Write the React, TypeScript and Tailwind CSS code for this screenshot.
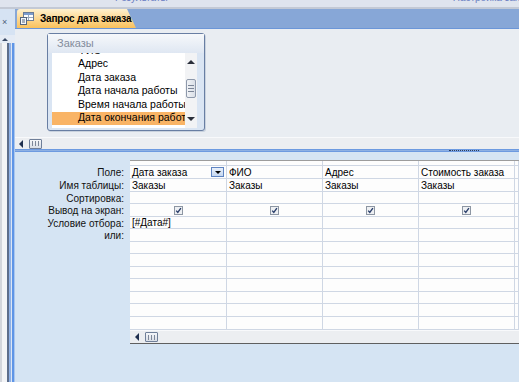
import React from "react";

const rowHeights = [
  "h-[13px]", "h-[13px]", "h-[12px]", "h-[13px]", "h-[12px]", "h-[13px]", "h-[12px]",
  "h-[13px]", "h-[12px]", "h-[13px]", "h-[12px]", "h-[13px]", "h-[13px]",
];

const labels = ["Поле:", "Имя таблицы:", "Сортировка:", "Вывод на экран:", "Условие отбора:", "или:"];

const columns = [
  { field: "Дата заказа", table: "Заказы", criteria: "[#Дата#]", dropdown: true, show: true, w: "w-[97px]" },
  { field: "ФИО", table: "Заказы", criteria: "", dropdown: false, show: true, w: "w-[96px]" },
  { field: "Адрес", table: "Заказы", criteria: "", dropdown: false, show: true, w: "w-[96px]" },
  { field: "Стоимость заказа", table: "Заказы", criteria: "", dropdown: false, show: true, w: "w-[96px]" },
  { field: "", table: "", criteria: "", dropdown: false, show: false, w: "flex-1" },
];

const fields = ["ФИО", "Адрес", "Дата заказа", "Дата начала работы", "Время начала работы", "Дата окончания работы"];

function CheckBox() {
  return (
    <svg width="9" height="9" viewBox="0 0 9 9">
      <rect x="0.5" y="0.5" width="8" height="8" fill="#eef0f3" stroke="#8d96a3" />
      <path d="M2.2 4.6 L3.8 6.4 L6.9 2.2" fill="none" stroke="#2b3f6b" strokeWidth="1.4" />
    </svg>
  );
}

function ScrollBar({ arrowLeft }: { arrowLeft: string }) {
  return (
    <div className="h-full flex items-center bg-[#eceef1] border-t border-[#f8f9fb]">
      <div className={`${arrowLeft} w-0 h-0 border-y-[4px] border-y-transparent border-r-[4px] border-r-[#1f2f4f]`} />
      <div className="ml-[6px] w-[13px] h-[10px] border border-[#6f7f99] rounded-[1px] bg-gradient-to-b from-[#f4f6f9] to-[#d9dee6] flex items-center justify-center gap-[2px]">
        <div className="w-px h-[5px] bg-[#7d8799]" />
        <div className="w-px h-[5px] bg-[#7d8799]" />
        <div className="w-px h-[5px] bg-[#7d8799]" />
      </div>
    </div>
  );
}

function QueryIcon() {
  return (
    <svg width="14" height="13" viewBox="0 0 14 13">
      <rect x="3.5" y="0.5" width="10" height="8" fill="#ffffff" stroke="#6b7c96" />
      <rect x="4" y="1" width="9" height="2" fill="#7d9ccd" />
      <line x1="8.5" y1="3" x2="8.5" y2="8" stroke="#9aa7ba" />
      <line x1="4" y1="5.5" x2="13" y2="5.5" stroke="#9aa7ba" />
      <rect x="0.5" y="5.5" width="6" height="7" fill="#f4f6fa" stroke="#56667f" />
      <line x1="2" y1="8" x2="5" y2="8" stroke="#56667f" />
      <line x1="2" y1="10" x2="5" y2="10" stroke="#56667f" />
    </svg>
  );
}

export default function App() {
  return (
    <div className="w-[519px] h-[382px] overflow-hidden flex flex-col bg-[#d5e4f3] font-['Liberation_Sans',Arial,sans-serif] text-black">
      {/* ribbon leftovers */}
      <div className="h-[9px] shrink-0 bg-[#dfe4ee] border-b-2 border-[#c3c9d5] overflow-hidden flex text-[10px] text-[#6b7fc2] leading-[12px]">
        <div className="ml-[115px] -mt-[8px]">Результаты</div>
        <div className="ml-[285px] -mt-[8px] whitespace-nowrap">Настройка запроса</div>
      </div>

      <div className="flex-1 flex min-h-0">
        {/* collapsed navigation pane */}
        <div className="w-[15px] shrink-0 flex flex-col">
          <div className="h-[26px] bg-[#d6e3f3] flex items-center pl-[2px] text-[9px] text-[#4d5d78] leading-none">×</div>
          <div className="h-[8px] bg-[#e4ebf5] flex items-center pl-[2px]">
            <div className="w-0 h-0 border-x-[3px] border-x-transparent border-b-[3px] border-b-[#3a4a66]" />
          </div>
          <div className="flex-1 flex">
            <div className="w-[2px] bg-[#d3d6dc]" />
            <div className="w-[5px] bg-[#f3f4f6]" />
            <div className="w-[2px] bg-[#5d6e8b]" />
            <div className="w-[2px] bg-[#8fb1e6]" />
            <div className="w-px bg-[#dce6f4]" />
            <div className="w-[2px] bg-[#5f95e6]" />
            <div className="w-px bg-[#a9c6ee]" />
          </div>
        </div>

        <div className="flex-1 flex flex-col min-w-0">
          {/* document tab bar */}
          <div className="h-[20px] shrink-0 bg-[#87a7d7] border-b border-[#6b96d8] flex items-end">
            <div className="ml-[2px] h-[19px] w-[119px] rounded-tl-[3px] bg-gradient-to-b from-[#fff1cf] via-[#fdd891] to-[#f9c15b] [clip-path:polygon(0_0,110px_0,119px_100%,0_100%)] flex items-center pl-[3px] gap-[6px]">
              <QueryIcon />
              <span className="text-[10px] font-bold whitespace-nowrap tracking-[-0.2px]">Запрос дата заказа</span>
            </div>
          </div>

          {/* table pane */}
          <div className="h-[108px] shrink-0 bg-[#e9edf2] pt-[4px] pl-[32px]">
            <div className="w-[158px] h-[98px] border border-[#687ea3] rounded-[3px] bg-[#dae5f3] flex flex-col shadow-[1px_1px_0_#c9d2de]">
              <div className="h-[19px] shrink-0 bg-gradient-to-b from-[#f6f8fb] to-[#dfe7f2] pl-[9px] flex items-center text-[11px] text-[#838c9c]">
                Заказы
              </div>
              <div className="flex ml-[4px] h-[75px]">
                <div className="w-[133px] h-full bg-white overflow-hidden">
                  <div className="-mt-[9px]">
                    {fields.map((f, i) => (
                      <div
                        key={f}
                        className={`h-[13.5px] flex items-center pl-[26px] text-[10.5px] whitespace-nowrap ${i === fields.length - 1 ? "bg-[#f9b466]" : ""}`}
                      >
                        {f}
                      </div>
                    ))}
                  </div>
                </div>
                <div className="w-[12px] h-full bg-[#f2f3f5] flex flex-col items-center">
                  <div className="mt-[7px] w-0 h-0 border-x-[4px] border-x-transparent border-b-[4px] border-b-[#2a2f3a]" />
                  <div className="mt-[15px] w-[10px] h-[19px] border border-[#8e99ab] rounded-[2px] bg-gradient-to-r from-[#f1f3f6] to-[#dadfe7] flex flex-col items-center justify-center gap-[2px]">
                    <div className="w-[6px] h-px bg-[#7b8597]" />
                    <div className="w-[6px] h-px bg-[#7b8597]" />
                    <div className="w-[6px] h-px bg-[#7b8597]" />
                  </div>
                  <div className="mt-[19px] w-0 h-0 border-x-[4px] border-x-transparent border-t-[4px] border-t-[#2a2f3a]" />
                </div>
              </div>
            </div>
          </div>

          {/* upper scrollbar */}
          <div className="h-[12px] shrink-0">
            <ScrollBar arrowLeft="ml-[4px]" />
          </div>

          {/* splitter */}
          <div className="h-[3px] shrink-0 bg-[#8eb0e2] border-y border-[#6d9ae0] flex justify-end pr-[40px]">
            <div className="w-[30px] border-t border-dotted border-[#2d3d5d]" />
          </div>

          {/* design grid pane */}
          <div className="flex-1 flex bg-[#d5e4f3] pt-[8px]">
            <div className="w-[115px] shrink-0 pt-[6px]">
              {rowHeights.map((h, i) => (
                <div key={i} className={`${h} flex items-center justify-end pr-[6px] text-[10px] text-[#111]`}>
                  {labels[i] ?? ""}
                </div>
              ))}
            </div>
            <div className="flex-1 flex flex-col">
              <div className="flex bg-[#fdfdfd] border-t border-[#9c9c9c]">
                {columns.map((c, ci) => (
                  <div key={ci} className={`${c.w} shrink-0 border-r border-[#cfd7e4]`}>
                    <div className="h-[5px] border-b border-[#cfd7e4]" />
                    {rowHeights.map((h, ri) => (
                      <div key={ri} className={`${h} border-b border-[#cfd7e4] flex items-center text-[10px] whitespace-nowrap overflow-hidden`}>
                        {ri === 0 && c.field && (
                          <div className="flex-1 flex items-center pl-[2px]">
                            <span className="flex-1">{c.field}</span>
                            {c.dropdown && (
                              <div className="mr-[2px] w-[13px] h-[10px] border border-[#5e84c2] bg-gradient-to-b from-[#e8f0fb] to-[#c6d8f1] flex flex-col items-center justify-center">
                                <div className="w-0 h-0 border-x-[3px] border-x-transparent border-t-[3px] border-t-black" />
                              </div>
                            )}
                          </div>
                        )}
                        {ri === 1 && c.table && <span className="pl-[2px]">{c.table}</span>}
                        {ri === 3 && c.show && (
                          <div className="flex-1 flex justify-center">
                            <CheckBox />
                          </div>
                        )}
                        {ri === 4 && c.criteria && <span className="pl-[2px]">{c.criteria}</span>}
                      </div>
                    ))}
                  </div>
                ))}
              </div>
              <div className="h-[14px] border-b border-[#5f5f5f]">
                <ScrollBar arrowLeft="ml-[5px]" />
              </div>
            </div>
          </div>
        </div>
      </div>
    </div>
  );
}
